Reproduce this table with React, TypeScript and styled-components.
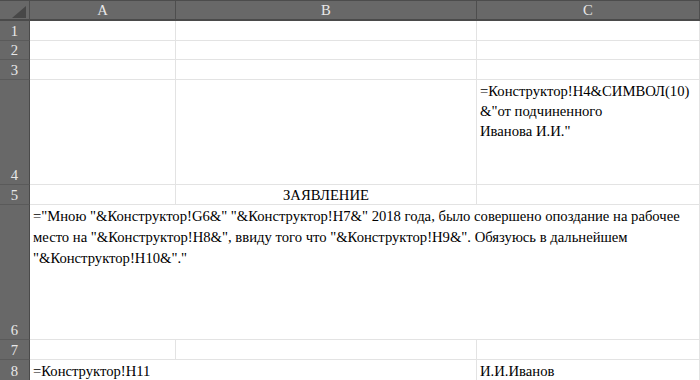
import React from 'react';
import styled, { createGlobalStyle } from 'styled-components';

const GlobalStyle = createGlobalStyle`
  html, body {
    margin: 0;
    padding: 0;
    background: #ffffff;
  }
  body {
    width: 700px;
    height: 380px;
    overflow: hidden;
    font-family: "Liberation Serif", "Times New Roman", serif;
  }
`;

const ROW_HEIGHTS = [20, 20, 19, 20, 105, 20, 135, 20, 21];

const Sheet = styled.div`
  display: grid;
  grid-template-columns: 30px 146px 301px 1fr;
  grid-template-rows: ${ROW_HEIGHTS.map((h) => `${h}px`).join(' ')};
  width: 700px;
  height: 380px;
  box-sizing: border-box;
  border-top: 1px solid #4c4c4c;
  font-family: "Liberation Serif", "Times New Roman", serif;
`;

const Corner = styled.div`
  background: #686868;
  border-right: 1px solid #4e4e4e;
  border-bottom: 2px solid #4a4a4a;
  display: flex;
  align-items: flex-end;
  justify-content: flex-end;
  padding: 0 3px 1px 0;
  box-sizing: border-box;
`;

const ColHead = styled.div`
  background: #686868;
  border-right: 1px solid #4e4e4e;
  border-bottom: 2px solid #4a4a4a;
  color: #e8e8e8;
  font-size: 14.67px;
  display: flex;
  align-items: center;
  justify-content: center;
  box-sizing: border-box;
`;

const RowHead = styled.div`
  background: #686868;
  border-right: 1px solid #4a4a4a;
  border-bottom: 1px solid #5a5a5a;
  color: #e8e8e8;
  font-size: 14.67px;
  line-height: 18px;
  display: flex;
  align-items: flex-end;
  justify-content: center;
  box-sizing: border-box;
`;

const Cell = styled.div<{
  $span?: number;
  $align?: 'left' | 'center';
  $valign?: 'top' | 'center' | 'bottom';
  $open?: boolean;
}>`
  grid-column: span ${(p) => p.$span ?? 1};
  border-right: 1px solid ${(p) => (p.$open ? 'transparent' : '#e3e3e3')};
  border-bottom: 1px solid #e3e3e3;
  box-sizing: border-box;
  color: #000000;
  font-size: 14.67px;
  line-height: 18px;
  padding: 0 3px;
  display: flex;
  flex-direction: column;
  justify-content: ${(p) =>
    p.$valign === 'top' ? 'flex-start' : p.$valign === 'center' ? 'center' : 'flex-end'};
  align-items: ${(p) => (p.$align === 'center' ? 'center' : 'flex-start')};
  white-space: nowrap;
  overflow: visible;
  position: relative;
  z-index: ${(p) => (p.$open ? 1 : 0)};
`;

const Lines = styled.div<{ $lh: number }>`
  line-height: ${(p) => p.$lh}px;
  padding-top: 1px;
`;

const Line = styled.div``;

function CornerMark() {
  return (
    <svg width="14" height="12" viewBox="0 0 14 12">
      <polygon points="0,12 14,12 14,0" fill="#474747" />
    </svg>
  );
}

export default function App() {
  return (
    <>
      <GlobalStyle />
      <Sheet>
        <Corner>
          <CornerMark />
        </Corner>
        <ColHead>A</ColHead>
        <ColHead>B</ColHead>
        <ColHead>C</ColHead>

        <RowHead>1</RowHead>
        <Cell />
        <Cell />
        <Cell />

        <RowHead>2</RowHead>
        <Cell />
        <Cell />
        <Cell />

        <RowHead>3</RowHead>
        <Cell />
        <Cell />
        <Cell />

        <RowHead>4</RowHead>
        <Cell />
        <Cell />
        <Cell $valign="top">
          <Lines $lh={20}>
            <Line>=Конструктор!H4&amp;СИМВОЛ(10)</Line>
            <Line>&amp;"от подчиненного</Line>
            <Line>Иванова И.И."</Line>
          </Lines>
        </Cell>

        <RowHead>5</RowHead>
        <Cell />
        <Cell $align="center">ЗАЯВЛЕНИЕ</Cell>
        <Cell />

        <RowHead>6</RowHead>
        <Cell $span={3} $valign="top">
          <Lines $lh={21}>
            <Line>
              ="Мною "&amp;Конструктор!G6&amp;" "&amp;Конструктор!H7&amp;" 2018 года, было совершено опоздание на рабочее
            </Line>
            <Line>
              место на "&amp;Конструктор!H8&amp;", ввиду того что "&amp;Конструктор!H9&amp;". Обязуюсь в дальнейшем
            </Line>
            <Line>"&amp;Конструктор!H10&amp;"."</Line>
          </Lines>
        </Cell>

        <RowHead>7</RowHead>
        <Cell />
        <Cell />
        <Cell />

        <RowHead>8</RowHead>
        <Cell $open>=Конструктор!H11</Cell>
        <Cell />
        <Cell>И.И.Иванов</Cell>
      </Sheet>
    </>
  );
}
